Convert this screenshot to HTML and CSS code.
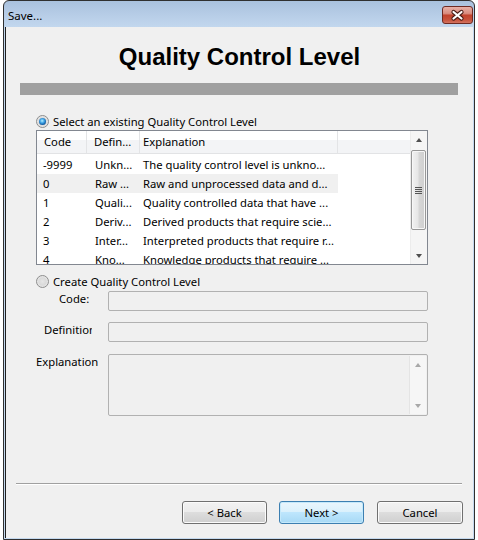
FILE: index.html
```html
<!DOCTYPE html>
<html>
<head>
<meta charset="utf-8">
<link rel="stylesheet" href="styles.css">
</head>
<body>
<div class="window">
  <div class="titlebar">
    <span class="title">Save...</span>
    <div class="close">
      <svg width="31" height="18" viewBox="0 0 31 18">
        <path d="M11.5 6 L19.5 12.5 M19.5 6 L11.5 12.5" stroke="#4a1c16" stroke-width="4.2" stroke-linecap="round"/>
        <path d="M11.5 6 L19.5 12.5 M19.5 6 L11.5 12.5" stroke="#ffffff" stroke-width="2.2" stroke-linecap="round"/>
      </svg>
    </div>
  </div>
  <div class="client">
    <h1 class="heading">Quality Control Level</h1>
    <div class="bar"></div>

    <div class="option opt1"><span class="radio checked"></span>Select an existing Quality Control Level</div>

    <div class="list">
      <div class="list-main">
        <div class="list-head">
          <div class="hcell h-code">Code</div>
          <div class="hcell h-def">Defin...</div>
          <div class="hcell h-expl">Explanation</div>
          <div class="hcell h-rest"></div>
        </div>
        <div class="rows">
          <div class="row"><span class="c-code">-9999</span><span class="c-def">Unkn...</span><span class="c-expl">The quality control level is unkno...</span></div>
          <div class="row hot"><span class="c-code">0</span><span class="c-def">Raw ...</span><span class="c-expl">Raw and unprocessed data and d...</span></div>
          <div class="row"><span class="c-code">1</span><span class="c-def">Quali...</span><span class="c-expl">Quality controlled data that have ...</span></div>
          <div class="row"><span class="c-code">2</span><span class="c-def">Deriv...</span><span class="c-expl">Derived products that require scie...</span></div>
          <div class="row"><span class="c-code">3</span><span class="c-def">Inter...</span><span class="c-expl">Interpreted products that require r...</span></div>
          <div class="row"><span class="c-code">4</span><span class="c-def">Kno...</span><span class="c-expl">Knowledge products that require ...</span></div>
        </div>
      </div>
      <div class="vscroll">
        <div class="sbtn"><span class="arrow up"></span></div>
        <div class="track"><div class="thumb"><span class="grip"></span></div></div>
        <div class="sbtn"><span class="arrow down"></span></div>
      </div>
    </div>

    <div class="option opt2"><span class="radio"></span>Create Quality Control Level</div>

    <div class="form">
      <div class="lbl lbl-code">Code:</div>
      <div class="field"></div>
      <div class="lbl lbl-def">Definition</div>
      <div class="field"></div>
      <div class="lbl lbl-expl">Explanation</div>
      <div class="field area">
        <div class="vscroll disabled">
          <div class="sbtn"><span class="arrow up"></span></div>
          <div class="track"></div>
          <div class="sbtn"><span class="arrow down"></span></div>
        </div>
      </div>
    </div>

    <div class="spacer"></div>
    <div class="separator"></div>
    <div class="buttons">
      <button class="btn">&lt; Back</button>
      <button class="btn default">Next &gt;</button>
      <button class="btn cancel">Cancel</button>
    </div>
  </div>
</div>
</body>
</html>
```

FILE: styles.css
```css
html, body {
  margin: 0;
  padding: 0;
  background: #ffffff;
}
body {
  font-family: "Noto Sans", "DejaVu Sans", sans-serif;
  font-size: 11.25px;
  color: #000;
}
.window {
  margin-left: 3px;
  width: 472px;
  height: 540px;
  box-sizing: border-box;
  border: 1px solid #2f2f2f;
  border-radius: 6px 6px 0 0;
  background: linear-gradient(#a9c1dd 0px, #b7cde7 14px, #c2d7ee 26px, #c4d9ef 100%);
  display: flex;
  flex-direction: column;
}
.titlebar {
  height: 26px;
  flex: none;
  display: flex;
  align-items: flex-start;
}
.title {
  margin: 7px 0 0 4px;
  font-size: 11.5px;
  line-height: 16px;
}
.close {
  margin: 5px 1px 0 auto;
  width: 31px;
  height: 18px;
  box-sizing: border-box;
  border: 1px solid #6e2a22;
  border-radius: 3px;
  background: linear-gradient(#e8b0a6 0%, #d98d80 40%, #c2432d 52%, #c7523c 80%, #d27360 100%);
  position: relative;
  overflow: hidden;
}
.close svg {
  position: absolute;
  left: -1px;
  top: -1px;
}
.client {
  flex: 1;
  margin: 0 1px 1px 1px;
  background: #f0f0f0;
  border-left: 1px solid #1f1f1f;
  display: flex;
  flex-direction: column;
}
.heading {
  margin: 16px 0 0 0;
  font-family: "Liberation Sans", Arial, sans-serif;
  font-weight: bold;
  font-size: 24px;
  line-height: 28px;
  text-align: center;
}
.bar {
  margin: 12px 15px 0 14px;
  height: 12px;
  background: #a0a0a0;
}
.option {
  display: flex;
  align-items: center;
  height: 16px;
  margin-left: 30px;
  white-space: nowrap;
}
.opt1 { margin-top: 18px; }
.opt2 { margin-top: 8px; }
.radio {
  width: 13px;
  height: 13px;
  box-sizing: border-box;
  border-radius: 50%;
  border: 1px solid #8d8d8d;
  background: radial-gradient(circle at 50% 50%, #e6e6e6 0, #dadada 45%, #f6f6f6 100%);
  margin-right: 4px;
  position: relative;
  flex: none;
}
.radio.checked::after {
  content: "";
  position: absolute;
  left: 2px;
  top: 2px;
  width: 7px;
  height: 7px;
  border-radius: 50%;
  background: radial-gradient(circle at 45% 40%, #b6f0ff 0, #45a8e8 35%, #0f5ba3 70%, #0b2f5c 100%);
}
.list {
  margin: 1px 0 0 30px;
  width: 392px;
  height: 135px;
  box-sizing: border-box;
  border: 1px solid #828790;
  background: #ffffff;
  display: flex;
}
.list-main {
  flex: 1;
  overflow: hidden;
}
.list-head {
  display: grid;
  grid-template-columns: 50px 53px 198px 1fr;
  height: 23px;
  box-sizing: border-box;
  border-bottom: 1px solid #e2e3e5;
  background: linear-gradient(#ffffff 0, #ffffff 40%, #f3f4f6 41%, #f3f4f6 100%);
}
.hcell {
  box-sizing: border-box;
  border-right: 1px solid #e3e4e6;
  line-height: 22px;
  white-space: nowrap;
  overflow: hidden;
}
.h-code { padding-left: 7px; }
.h-def { padding-left: 7px; }
.h-expl { padding-left: 3px; }
.h-rest { border-right: none; }
.rows {
  padding-top: 1px;
}
.row {
  display: grid;
  grid-template-columns: 50px 53px 198px;
  width: 301px;
  height: 19px;
  line-height: 19px;
  white-space: nowrap;
}
.row span { overflow: hidden; }
.row.hot { background: #f0f0f0; }
.c-code { padding-left: 6px; }
.c-def { padding-left: 8px; }
.c-expl { padding-left: 3px; }
.vscroll {
  width: 17px;
  flex: none;
  display: flex;
  flex-direction: column;
  background: #f5f5f5;
  border-left: 1px solid #ececec;
  box-sizing: border-box;
}
.sbtn {
  height: 17px;
  flex: none;
  display: flex;
  align-items: center;
  justify-content: center;
}
.arrow {
  width: 0;
  height: 0;
  border-left: 3.5px solid transparent;
  border-right: 3.5px solid transparent;
}
.arrow.up { border-bottom: 4px solid #4f4f4f; }
.arrow.down { border-top: 4px solid #4f4f4f; }
.track {
  flex: 1;
}
.thumb {
  margin: 2px 0 0 0;
  width: 15px;
  height: 80px;
  box-sizing: border-box;
  border: 1px solid #979797;
  border-radius: 2px;
  background: linear-gradient(90deg, #f2f2f2 0%, #e6e6e6 45%, #d6d6d6 55%, #cfcfcf 100%);
  box-shadow: inset 0 0 0 1px #f7f7f7;
  display: flex;
  align-items: center;
  justify-content: center;
}
.grip {
  width: 7px;
  height: 7px;
  background: repeating-linear-gradient(#555 0, #555 1px, transparent 1px, transparent 2px);
}
.form {
  margin: 2px 0 0 30px;
  display: grid;
  grid-template-columns: 72px 320px;
  grid-template-rows: 20px 20px 63px;
  row-gap: 11px;
}
.form .field:last-child { margin-top: 1px; }
.lbl {
  line-height: 16px;
  white-space: nowrap;
  overflow: hidden;
}
.lbl-code { padding-left: 23px; }
.lbl-def {
  box-sizing: border-box;
  padding-left: 8px;
  width: 56px;
}
.lbl-expl { padding-left: 0; margin-top: 1px; }
.field {
  box-sizing: border-box;
  border: 1px solid #b1b1b1;
  border-radius: 2px;
  background: #f0f0f0;
}
.field.area {
  display: flex;
  justify-content: flex-end;
  padding: 1px 1px 1px 0;
}
.vscroll.disabled {
  background: #f6f6f6;
  border-left: 1px solid #e4e4e4;
}
.vscroll.disabled .arrow.up { border-bottom-color: #a8a8a8; }
.vscroll.disabled .arrow.down { border-top-color: #a8a8a8; }
.spacer { flex: 1; }
.separator {
  margin: 0 11px 0 10px;
  height: 1px;
  background: #a0a0a0;
  border-bottom: 1px solid #ffffff;
}
.buttons {
  margin: 16px 10px 14px 0;
  display: flex;
  justify-content: flex-end;
  gap: 12px;
}
.btn {
  width: 85px;
  height: 23px;
  box-sizing: border-box;
  border: 1px solid #707070;
  border-radius: 3px;
  background: linear-gradient(#f2f2f2 0%, #ebebeb 50%, #dddddd 50%, #cfcfcf 100%);
  box-shadow: inset 0 0 0 1px #fbfbfb;
  font-family: "Noto Sans", "DejaVu Sans", sans-serif;
  font-size: 11.25px;
  color: #000;
  padding: 0;
}
.btn.default {
  border-color: #3c7fb1;
  background: linear-gradient(#eaf6fd 0%, #d9f0fc 50%, #bee6fd 50%, #a7d9f5 100%);
  box-shadow: inset 0 0 0 1px #c5e9fb;
}
.btn.cancel { width: 86px; margin-left: 1px; }
```
